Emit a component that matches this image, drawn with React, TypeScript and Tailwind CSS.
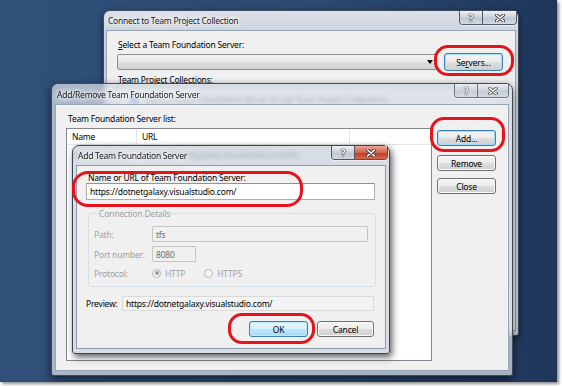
import React from "react";

function QIcon() {
  return (
    <span className="text-[10px] leading-[10px] font-bold text-white [text-shadow:0_0_1px_#222,0_0_1px_#222,0_0_1px_#222]">
      ?
    </span>
  );
}

function XIcon() {
  return (
    <svg width="10" height="8" viewBox="0 0 10 8">
      <path d="M1.5 1L8.5 7M8.5 1L1.5 7" stroke="#3a3a3a" strokeWidth="3.2" strokeLinecap="round" />
      <path d="M1.5 1L8.5 7M8.5 1L1.5 7" stroke="#ffffff" strokeWidth="1.6" strokeLinecap="round" />
    </svg>
  );
}

function Caps({ active, qw, xw }: { active?: boolean; qw: string; xw: string }) {
  return (
    <div className="flex h-[14px] rounded-b-[4px] border border-t-0 border-[#4c5868] overflow-hidden shadow-[0_1px_0_rgba(255,255,255,0.6)]">
      <div className={`${qw} flex items-center justify-center border-r border-[#4c5868] bg-[linear-gradient(#eef1f5,#c9d0da_50%,#bcc5d1_51%,#d2d9e2)]`}>
        <QIcon />
      </div>
      <div
        className={`${xw} flex items-center justify-center ${
          active
            ? "bg-[linear-gradient(#e9a99c,#d0654f_50%,#c03b22_51%,#d9684d)]"
            : "bg-[linear-gradient(#eef1f5,#c9d0da_50%,#bcc5d1_51%,#d2d9e2)]"
        }`}
      >
        <XIcon />
      </div>
    </div>
  );
}

function Title({ children }: { children: React.ReactNode }) {
  return (
    <span className="relative text-[8.5px] tracking-[-0.25px] text-[#1c1c1c] [text-shadow:0_0_4px_#fff,0_0_6px_#fff,0_0_8px_#fff]">
      {children}
    </span>
  );
}

const btnBase =
  "flex items-center justify-center rounded-[3px] border text-black text-[8.5px] leading-[11px]";
const btnGray =
  "bg-[linear-gradient(#f4f4f4,#ececec_50%,#dedede_51%,#d0d0d0)]";

export default function App() {
  return (
    <div className="w-[562px] h-[386px] bg-white relative overflow-hidden font-['Noto_Sans','Open_Sans',sans-serif] text-[8.5px] leading-[11px] tracking-[-0.2px]">
      <div className="relative w-[557px] h-[382px] bg-[linear-gradient(90deg,#30507a,#2a4870_60%,#1f365a)] shadow-[2px_2px_3px_rgba(0,0,0,0.45)] overflow-hidden">
        {/* Window 1 */}
        <div className="absolute left-[103px] top-[10px] w-[416px] h-[326px] rounded-t-[7px] rounded-b-[3px] border border-[#3f4a5a] bg-[linear-gradient(#dbe1e9,#c7d0db_30px,#c3ccd8)] shadow-[0_2px_6px_rgba(0,0,0,0.5)] flex flex-col">
          <div className="h-[19px] relative flex items-center pl-[4px]">
            <Title>Connect to Team Project Collection</Title>
            <div className="absolute right-[1px] top-0">
              <Caps qw="w-[23px]" xw="w-[33px]" />
            </div>
          </div>
          <div className="flex-1 mx-[2px] mb-[4px] bg-[#f0f0f0] border border-[#99a5b4]">
            <div className="pt-[8px] pl-[11px] flex flex-col">
              <div className="text-black">
                <span className="underline">S</span>elect a Team Foundation Server:
              </div>
              <div className="mt-[3px] -ml-[1px] flex items-center">
                <div className="relative w-[320px] h-[16px] rounded-[2px] border border-[#8e8f8f] bg-[linear-gradient(#f2f2f2,#ebebeb_50%,#dddddd_51%,#d2d2d2)]">
                  <svg className="absolute right-[3px] top-[5px]" width="6" height="4" viewBox="0 0 6 4">
                    <path d="M0 0H6L3 4Z" fill="#000" />
                  </svg>
                </div>
                <div className={`${btnBase} ml-[7px] w-[59px] h-[18px] border-[#3c7fb1] shadow-[inset_0_0_0_1px_#a3dcf5] ${btnGray}`}>
                  Se<span className="underline">r</span>vers...
                </div>
              </div>
              <div className="mt-[3px] text-black">Team Project Collections:</div>
              <div className="mt-[1px] -ml-[1px] w-[390px] h-[200px] bg-white border border-[#828790] flex flex-col">
                <div className="mt-[7px] pl-[12px] flex items-center gap-[5px]">
                  <div className="w-[9px] h-[9px] rounded-full bg-[#3a78c9] border border-[#1d4f93]" />
                  <span className="text-[#222]">Select a Team Foundation Server to see Team Project Collections.</span>
                </div>
              </div>
            </div>
          </div>
        </div>

        {/* Window 2 */}
        <div className="absolute left-[51px] top-[83px] w-[462px] h-[293px] rounded-t-[7px] rounded-b-[3px] border border-[#3f4a5a] bg-[#d3dae3]/75 backdrop-blur-[2px] shadow-[0_3px_8px_rgba(0,0,0,0.6)] flex flex-col">
          <div className="h-[20px] relative flex items-center pl-[5px]">
            <Title>Add/Remove Team Foundation Server</Title>
            <div className="absolute right-[3px] top-0 opacity-80">
              <Caps qw="w-[23px]" xw="w-[30px]" />
            </div>
          </div>
          <div className="flex-1 mx-[3px] mb-[4px] bg-[#f0f0f0] border border-[#99a5b4]">
            <div className="flex pl-[10px] pt-[8px]">
              <div className="flex flex-col">
                <div className="ml-[2px] text-black">Team Foundation Server list:</div>
                <div className="mt-[4px] w-[366px] h-[233px] bg-white border border-[#828790] flex flex-col">
                  <div className="h-[16px] flex border-b border-[#e5e5e5] text-black">
                    <div className="w-[70px] pl-[5px] flex items-center border-r border-[#e5e5e5]">Name</div>
                    <div className="w-[213px] pl-[5px] flex items-center border-r border-[#e5e5e5]">URL</div>
                    <div className="flex-1" />
                  </div>
                  <div className="mt-[4px] flex text-[#333]">
                    <div className="w-[70px] pl-[5px]">dotnetgalaxy</div>
                    <div className="pl-[6px]">https://dotnetgalaxy.visualstudio.com/tfs</div>
                  </div>
                </div>
              </div>
              <div className="ml-[5px] pt-[17px] flex flex-col">
                <div className={`${btnBase} w-[59px] h-[16px] border-[#3c7fb1] shadow-[inset_0_0_0_1px_#a3dcf5] ${btnGray}`}>Add...</div>
                <div className={`${btnBase} mt-[9px] w-[59px] h-[16px] border-[#707070] shadow-[inset_0_0_0_1px_#fbfbfb] ${btnGray}`}>Remove</div>
                <div className={`${btnBase} mt-[7px] w-[59px] h-[16px] border-[#707070] shadow-[inset_0_0_0_1px_#fbfbfb] ${btnGray}`}>Close</div>
              </div>
            </div>
          </div>
        </div>

        {/* Window 3 */}
        <div className="absolute left-[72px] top-[145px] w-[318px] h-[209px] rounded-t-[7px] rounded-b-[3px] border border-[#3a4452] bg-[#c9d1dc]/75 backdrop-blur-[2px] shadow-[2px_3px_7px_rgba(0,0,0,0.65)] flex flex-col">
          <div className="h-[19px] relative flex items-center pl-[5px]">
            <Title>Add Team Foundation Server</Title>
            <div className="absolute right-[1px] top-0">
              <Caps active qw="w-[23px]" xw="w-[32px]" />
            </div>
          </div>
          <div className="flex-1 mx-[3px] mb-[4px] bg-[#f0f0f0] border border-[#8f9aa8]">
            <div className="pl-[9px] pt-[6px] flex flex-col">
              <div className="ml-[2px] text-black">Name or URL of Team Foundation Server:</div>
              <div className="w-[289px] h-[17px] bg-white border border-[#abadb3] border-t-[#8e9299] pl-[3px] flex items-center text-black">
                https://dotnetgalaxy.visualstudio.com/
              </div>
              <fieldset className="ml-[2px] mt-[8px] w-[288px] border border-[#d5dfe5] rounded-[3px] pl-[5px] pb-[7px]">
                <legend className="ml-[4px] px-[1px] text-[#a0a0a0]">Connection Details</legend>
                <div className="mt-[7px] flex items-center">
                  <div className="w-[58px] text-[#a0a0a0]">Path:</div>
                  <div className="w-[216px] h-[16px] border border-[#c5c5c5] rounded-[1px] bg-[#f0f0f0] pl-[3px] flex items-center text-[#6d6d6d]">tfs</div>
                </div>
                <div className="mt-[4px] flex items-center">
                  <div className="w-[58px] text-[#a0a0a0]">Port number:</div>
                  <div className="w-[44px] h-[16px] border border-[#c5c5c5] rounded-[1px] bg-[#f0f0f0] pl-[3px] flex items-center text-[#6d6d6d]">8080</div>
                </div>
                <div className="mt-[5px] flex items-center h-[12px]">
                  <div className="w-[58px] text-[#a0a0a0]">Protocol:</div>
                  <div className="flex items-center gap-[4px]">
                    <div className="w-[9px] h-[9px] rounded-full border border-[#b5b5b5] bg-[#f4f4f4] flex items-center justify-center">
                      <div className="w-[4px] h-[4px] rounded-full bg-[#9a9a9a]" />
                    </div>
                    <span className="text-[#a0a0a0]">HTTP</span>
                  </div>
                  <div className="ml-[19px] flex items-center gap-[4px]">
                    <div className="w-[9px] h-[9px] rounded-full border border-[#b5b5b5] bg-[#f4f4f4]" />
                    <span className="text-[#a0a0a0]">HTTPS</span>
                  </div>
                </div>
              </fieldset>
              <div className="mt-[9px] w-[289px] flex items-center">
                <div className="w-[36px] text-black">Preview:</div>
                <div className="w-[252px] h-[15px] border border-[#d9d9d9] bg-[#f3f3f3] pl-[3px] flex items-center text-black">
                  https://dotnetgalaxy.visualstudio.com/
                </div>
              </div>
              <div className="mt-[10px] w-[289px] pr-[1px] flex justify-end gap-[9px]">
                <div className={`${btnBase} w-[59px] h-[16px] border-[#3c7fb1] shadow-[inset_0_0_0_1px_#bfeafc] bg-[linear-gradient(#eaf6fd,#d9f0fc_50%,#bee6fd_51%,#a9dbf6)]`}>OK</div>
                <div className={`${btnBase} w-[57px] h-[16px] border-[#707070] shadow-[inset_0_0_0_1px_#fbfbfb] ${btnGray}`}>Cancel</div>
              </div>
            </div>
          </div>
        </div>

        {/* Red highlight marks */}
        <div className="absolute left-[434px] top-[45px] w-[80px] h-[31px] rounded-[14px] border-[3px] border-[#e5131b]" />
        <div className="absolute left-[430px] top-[117px] w-[75px] h-[35px] rounded-[14px] border-[3px] border-[#e5131b]" />
        <div className="absolute left-[72px] top-[171px] w-[231px] h-[36px] rounded-[16px] border-[3px] border-[#e5131b]" />
        <div className="absolute left-[228px] top-[313px] w-[87px] h-[31px] rounded-[14px] border-[3px] border-[#e5131b]" />
      </div>
    </div>
  );
}
